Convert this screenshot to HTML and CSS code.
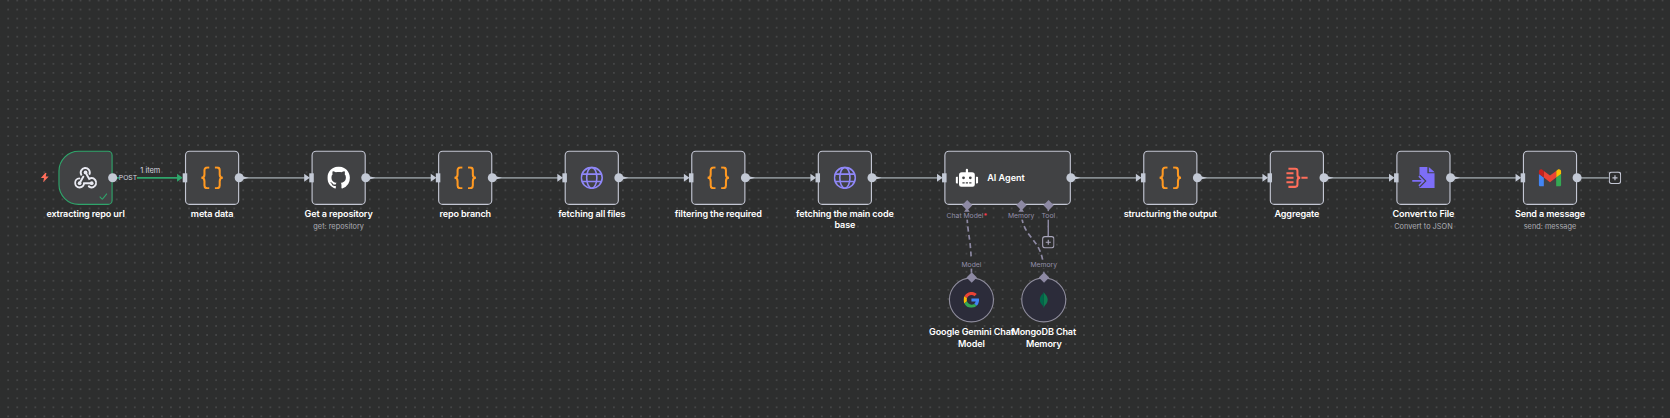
FILE: index.html
```
<!DOCTYPE html>
<html lang="en">
<head>
<meta charset="utf-8">
<title>Workflow</title>
<link rel="stylesheet" href="styles.css">
</head>
<body>
<svg class="defs" aria-hidden="true">
  <defs>
    <symbol id="braces" viewBox="0 0 40 40"><path d="M15 1.5h-3.5a5 5 0 0 0-5 5v7.5c0 3.500-2 6-5.500 6 3.500 0 5.500 2.500 5.500 6v7.500a5 5 0 0 0 5 5H15M25 1.500h3.500a5 5 0 0 1 5 5V14c0 3.500 2 6 5.500 6-3.500 0-5.500 2.500-5.500 6v7.500a5 5 0 0 1-5 5H25" fill="none" stroke="#ff9922" stroke-width="3.600"/></symbol>
    <symbol id="globe" viewBox="0 0 40 40"><g fill="none" stroke="#8f87f7" stroke-width="2.800"><circle cx="20" cy="20" r="18.500"/><ellipse cx="20" cy="20" rx="9" ry="18.500"/><path d="M3 13.500h34M3 26.500h34"/></g></symbol>
  </defs>
</svg>
<main class="viewport">
  <svg class="grid" width="1670" height="418">
    <defs><pattern id="dots" x="3.700" y="-4" width="9.040" height="9.040" patternUnits="userSpaceOnUse"><circle cx="4.520" cy="4.520" r="0.750" fill="#616263"/></pattern></defs>
    <rect width="1670" height="418" fill="url(#dots)"/>
  </svg>
  <div class="canvas">
    <svg class="edges" width="2800" height="400">
      <path class="edge done" d="M98 48H212"/>
      <path class="edge" d="M322 48H438M546 48H662M770 48H886M994 48H1110M1218 48H1334M1442 48H1558M1794 48H1910M2018 48H2134M2242 48H2358M2466 48H2582M2690 48H2744"/>
      <path class="edge dashed" d="M1608 104C1608 150 1616 150 1616 216M1704 104C1704 160 1744 150 1744 216"/>
      <path class="edge sub-edge" d="M1752 104V162"/>
    </svg>

    <section class="node n1">
      <svg class="bolt" viewBox="0 0 14 17"><path d="M8 0 0 9.500h5.500L4 17l10-10.500H8.500L10 0z" fill="#ff6d5a"/></svg>
      <div class="box trigger">
        <svg class="icon" viewBox="0 0 40 40"><g fill="none" stroke="#e9eaf2" stroke-width="3.500" stroke-linecap="round"><path d="M12.500 14.500a8 8 0 1 1 14.700-1.500M20 10.500l6.500 11.500a8 8 0 1 1-.5 13.200M31 29.500H17.500a8 8 0 1 1-8.500-8.500M9.500 29.500 16 18"/></g><g fill="#e9eaf2"><circle cx="20" cy="10.500" r="3.300"/><circle cx="9.500" cy="29.500" r="3.300"/><circle cx="31" cy="29.500" r="3.300"/></g></svg>
        <svg class="tick" viewBox="0 0 16 13"><path d="m1 7 5 5L15 1" fill="none" stroke="#2fa56b" stroke-width="2"/></svg>
      </div>
      <i class="out"></i>
      <p class="title">extracting repo url</p>
      <span class="method">POST</span><span class="count">1 item</span>
    </section>

    <section class="node n2"><i class="in done"></i><div class="box"><svg class="icon"><use href="#braces"/></svg></div><i class="out tail"></i><p class="title">meta data</p></section>

    <section class="node n3"><i class="in"></i><div class="box"><svg class="icon" viewBox="0 0 16 16"><path fill="#fff" d="M8 0C3.580 0 0 3.580 0 8c0 3.540 2.290 6.530 5.470 7.590.4.070.55-.17.55-.38 0-.19-.01-.82-.01-1.490-2.010.37-2.530-.49-2.690-.94-.09-.23-.48-.94-.82-1.130-.28-.15-.68-.52-.01-.53.63-.01 1.080.58 1.230.82.72 1.210 1.870.87 2.330.66.07-.52.28-.87.51-1.070-1.780-.2-3.640-.89-3.640-3.950 0-.87.31-1.590.82-2.150-.08-.2-.36-1.020.08-2.120 0 0 .67-.21 2.200.82.64-.18 1.320-.27 2-.27s1.360.09 2 .27c1.530-1.040 2.200-.82 2.200-.82.44 1.100.16 1.920.08 2.120.51.56.82 1.270.82 2.150 0 3.070-1.870 3.750-3.650 3.950.29.25.54.73.54 1.480 0 1.070-.01 1.930-.01 2.200 0 .21.15.46.55.38A8.010 8.010 0 0 0 16 8c0-4.420-3.580-8-8-8z"/></svg></div><i class="out tail"></i><p class="title">Get a repository</p><p class="subtitle">get: repository</p></section>

    <section class="node n4"><i class="in"></i><div class="box"><svg class="icon"><use href="#braces"/></svg></div><i class="out tail"></i><p class="title">repo branch</p></section>
    <section class="node n5"><i class="in"></i><div class="box"><svg class="icon"><use href="#globe"/></svg></div><i class="out tail"></i><p class="title">fetching all files</p></section>
    <section class="node n6"><i class="in"></i><div class="box"><svg class="icon"><use href="#braces"/></svg></div><i class="out tail"></i><p class="title">filtering the required</p></section>
    <section class="node n7"><i class="in"></i><div class="box"><svg class="icon"><use href="#globe"/></svg></div><i class="out tail"></i><p class="title">fetching the main code<br>base</p></section>

    <section class="node agent"><i class="in"></i>
      <div class="box wide"><svg class="icon" viewBox="0 0 640 512"><path fill="#fff" d="M32 224H64V416H32A32 32 0 0 1 0 384V256A32 32 0 0 1 32 224Zm512-48V448a64 64 0 0 1-64 64H160a64 64 0 0 1-64-64V176a80 80 0 0 1 80-80H288V32a32 32 0 0 1 64 0V96H464A80 80 0 0 1 544 176ZM264 256a40 40 0 1 0-40 40A40 40 0 0 0 264 256Zm-8 128H192v32h64Zm96 0H288v32h64ZM456 256a40 40 0 1 0-40 40A40 40 0 0 0 456 256Zm-8 128H384v32h64ZM640 256V384a32 32 0 0 1-32 32H576V224h32A32 32 0 0 1 640 256Z"/></svg><span class="name">AI Agent</span></div>
      <i class="out tail"></i>
      <div class="port p-model"><i class="diamond"></i><i class="arrow"></i><span>Chat Model<b>*</b></span></div>
      <div class="port p-memory"><i class="diamond"></i><i class="arrow"></i><span>Memory</span></div>
      <div class="port p-tool"><i class="diamond"></i><span>Tool</span></div>
      <svg class="plus add-tool" viewBox="0 0 22 22"><rect x="1" y="1" width="20" height="20" rx="4"/><path d="M11 6.500v9M6.500 11h9"/></svg>
    </section>

    <section class="node n8"><i class="in"></i><div class="box"><svg class="icon"><use href="#braces"/></svg></div><i class="out tail"></i><p class="title">structuring the output</p></section>
    <section class="node n9"><i class="in"></i><div class="box"><svg class="icon" viewBox="0 0 40 40"><path d="M5 4h12a4 4 0 0 1 4 4v7q0 5 5 5-5 0-5 5v7a4 4 0 0 1-4 4H5M1.500 12H14M1.500 20H14M1.500 28H14M28 20h11" fill="none" stroke="#ff6d5a" stroke-width="3.600"/></svg></div><i class="out tail"></i><p class="title">Aggregate</p></section>
    <section class="node n10"><i class="in"></i><div class="box"><svg class="icon" viewBox="0 0 40 40"><path fill="#7d6ef8" d="M13 1h14v11h13v26H13V30l5-5-5-6zM29.500 1 40 10H29.500z"/><path d="M0 25.500h20M12 17l8.500 8.500-8.500 8.500" fill="none" stroke="#414244" stroke-width="7"/><path d="M0 25.500h20M12 17l8.500 8.500-8.500 8.500" fill="none" stroke="#7d6ef8" stroke-width="3"/></svg></div><i class="out tail"></i><p class="title">Convert to File</p><p class="subtitle">Convert to JSON</p></section>
    <section class="node n11"><i class="in"></i><div class="box"><svg class="icon" viewBox="52 42 88 66"><path fill="#4285f4" d="M58 108h14V74L52 59v43c0 3.320 2.690 6 6 6"/><path fill="#34a853" d="M120 108h14c3.320 0 6-2.690 6-6V59l-20 15"/><path fill="#fbbc04" d="M120 48v26l20-15v-8c0-7.420-8.470-11.650-14.400-7.200"/><path fill="#ea4335" d="M72 74V48l24 18 24-18v26L96 92"/><path fill="#c5221f" d="M52 51v8l20 15V48l-5.600-4.200c-5.940-4.450-14.400-.22-14.400 7.200"/></svg></div><i class="out"></i><p class="title">Send a message</p><p class="subtitle">send: message</p>
      <svg class="plus add-next" viewBox="0 0 22 22"><rect x="1" y="1" width="20" height="20" rx="4"/><path d="M11 6.500v9M6.500 11h9"/></svg>
    </section>

    <section class="node sub gemini"><i class="diamond"></i><span class="link">Model</span><div class="disc"><svg viewBox="0 0 48 48"><path fill="#ea4335" d="M24 9.500c3.540 0 6.710 1.220 9.210 3.600l6.850-6.850C35.900 2.380 30.470 0 24 0 14.620 0 6.510 5.380 2.560 13.220l7.980 6.190C12.430 13.720 17.740 9.500 24 9.500z"/><path fill="#4285f4" d="M46.980 24.550c0-1.570-.15-3.090-.38-4.550H24v9.020h12.940c-.58 2.960-2.260 5.480-4.780 7.180l7.730 6c4.510-4.180 7.090-10.360 7.090-17.650z"/><path fill="#fbbc05" d="M10.530 28.590c-.48-1.450-.76-2.990-.76-4.590s.27-3.140.76-4.590l-7.980-6.190C.92 16.460 0 20.120 0 24c0 3.880.92 7.540 2.560 10.780l7.970-6.190z"/><path fill="#34a853" d="M24 48c6.480 0 11.930-2.130 15.890-5.810l-7.730-6c-2.150 1.450-4.920 2.300-8.160 2.300-6.260 0-11.570-4.220-13.470-9.910l-7.980 6.190C6.510 42.620 14.620 48 24 48z"/></svg></div><p class="title">Google Gemini Chat<br>Model</p></section>
    <section class="node sub mongo"><i class="diamond"></i><span class="link">Memory</span><div class="disc"><svg viewBox="0 0 30 30"><path fill="#0f7a4f" d="M15 0c2 5 7.500 7 7.500 15 0 6-3.500 9-6.500 12l-.5 3H15z"/><path fill="#00684a" d="M15 0c-2 5-7.500 7-7.500 15 0 6 3.500 9 6.500 12l.5 3h.5z"/></svg></div><p class="title">MongoDB Chat<br>Memory</p></section>
  </div>
</main>
</body>
</html>
```
FILE: styles.css
```
* { box-sizing: border-box; }
body { margin: 0; background: #2d2e2e; font-family: Inter, "Open Sans", sans-serif; }
.defs { position: absolute; width: 0; height: 0; }
.viewport { position: relative; width: 1670px; height: 418px; overflow: hidden; background: #2d2e2e; }
.grid { display: block; }

/* Canvas coordinates are workflow units, zoomed out to fit the window. */
.canvas { position: absolute; left: 0; top: 0; width: 2800px; height: 400px; transform: translate(58.4px, 150.7px) scale(.565); transform-origin: 0 0; }
.edges { position: absolute; left: 0; top: 0; overflow: visible; }
.edge { fill: none; stroke: #858c90; stroke-width: 3.300; }
.edge.done { stroke: #2fa56b; }
.edge.dashed { stroke: #8d89a3; stroke-dasharray: 9 6; stroke-width: 3; }
.edge.sub-edge { stroke: #8d89a3; stroke-width: 2.600; }

.node { position: absolute; top: 0; width: 96px; display: flex; flex-direction: column; align-items: center; }
.n1 { left: 0; }
.n2 { left: 224px; }
.n3 { left: 448px; }
.n4 { left: 672px; }
.n5 { left: 896px; }
.n6 { left: 1120px; }
.n7 { left: 1344px; }
.agent { left: 1568px; width: 224px; }
.n8 { left: 1920px; }
.n9 { left: 2144px; }
.n10 { left: 2368px; }
.n11 { left: 2592px; }
.gemini { left: 1576px; top: 224px; }
.mongo { left: 1704px; top: 224px; }
.sub { width: 80px; }

.box { position: relative; width: 96px; height: 96px; flex: none; display: flex; align-items: center; justify-content: center; border: 2.500px solid #c3c6d3; border-radius: 8px; background: #414244; }
.box.trigger { border-color: #2fa56b; border-radius: 36px 8px 8px 36px; }
.box.wide { width: 224px; justify-content: flex-start; gap: 16px; padding-left: 18px; }
.icon { width: 40px; height: 40px; display: block; }
.tick { position: absolute; right: 7px; bottom: 7px; width: 15px; height: 12px; }
.bolt { position: absolute; left: -31px; top: 39px; width: 14px; height: 17px; }
.name { font-size: 16px; line-height: 20px; font-weight: 600; color: #fff; padding-bottom: 1px; }

.title { margin: 5px 0 0; font-size: 16px; line-height: 20px; font-weight: 600; letter-spacing: -.2px; color: #fff; text-align: center; white-space: nowrap; }
.sub .title { margin-top: 6.500px; }
.subtitle { margin: 3px 0 0; font-size: 13px; line-height: 18px; color: #acadb4; white-space: nowrap; }

.in { position: absolute; z-index: 1; left: -4px; top: 40px; width: 8px; height: 16px; background: #c3c9d5; }
.in::before { content: ""; position: absolute; right: 7px; top: 1px; border: 7px solid transparent; border-left: 10px solid #c3c9d5; border-right: 0; }
.in.done::before { border-left-color: #2fa56b; right: 8px; }
.out { position: absolute; z-index: 1; right: -8px; top: 40px; width: 16px; height: 16px; border-radius: 50%; background: #c3c9d5; }
.out.tail::after { content: ""; position: absolute; left: 14px; top: 5px; border: 3px solid transparent; border-left: 11px solid #c3c9d5; border-right: 0; }

.method, .count { position: absolute; font-size: 12px; line-height: 14px; white-space: nowrap; color: #d8dae0; }
.method { left: 107px; top: 41px; background: #2d2e2e; }
.count { left: 145px; top: 28px; font-size: 13px; }

.diamond { position: absolute; z-index: 1; left: 50%; top: -6.500px; width: 13px; height: 13px; margin-left: -6.500px; background: #8d89a3; transform: rotate(45deg); }
.port { position: absolute; top: 96px; width: 90px; display: flex; justify-content: center; padding-top: 11px; font-size: 12px; line-height: 15px; color: #9490aa; }
.port span { white-space: nowrap; background: #2d2e2e; }
.port b { color: #ff3b4e; }
.p-model { left: -5px; }
.p-memory { left: 91px; }
.p-tool { left: 139px; }
.arrow { position: absolute; left: 50%; top: 5px; margin-left: -5px; border: 5px solid transparent; border-bottom: 7px solid #8d89a3; border-top: 0; }

.plus { position: absolute; width: 22px; height: 22px; fill: #2d2e2e; stroke: #c3c6d3; stroke-width: 2; }
.add-tool { left: 173px; top: 151px; stroke: #a9a6bb; }
.add-next { left: 152px; top: 37px; }

.link { position: absolute; top: -31px; font-size: 12px; line-height: 15px; color: #9490aa; background: #2d2e2e; }
.disc { width: 80px; height: 80px; flex: none; display: flex; align-items: center; justify-content: center; border: 2.500px solid #8e8c9c; border-radius: 50%; background: #2c2c3a; }
.disc svg { width: 28px; height: 28px; }
```
